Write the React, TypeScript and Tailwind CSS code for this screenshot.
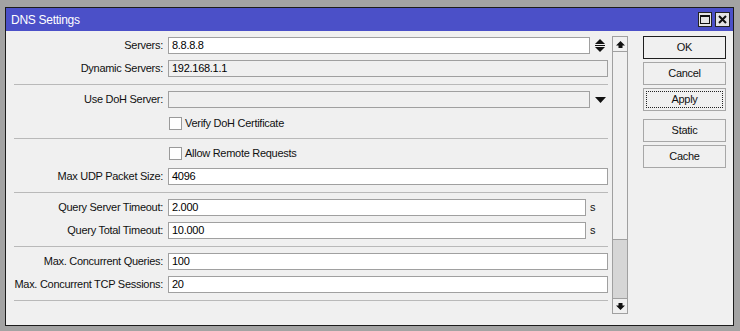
import React from "react";

const font = { fontFamily: "'Liberation Sans', Arial, sans-serif" };

function Row({ label, children }: { label: string; children?: React.ReactNode }) {
  return (
    <div className="flex h-[17px] items-center">
      <div className="w-[158px] shrink-0 pr-[1px] text-right leading-[17px]">{label}</div>
      <div className="ml-[4px] flex h-[17px] items-center">{children}</div>
    </div>
  );
}

function Input({ value, w, gray }: { value?: string; w: number; gray?: boolean }) {
  return (
    <div
      className={
        "box-border h-[17px] border border-[#a0a0a0] pl-[3px] leading-[15px] text-black " +
        (gray ? "bg-[#f0f0f0]" : "bg-white")
      }
      style={{ width: w }}
    >
      {value}
    </div>
  );
}

function Sep({ top = 7 }: { top?: number }) {
  return (
    <div
      className={"ml-[8px] mb-[6px] h-px w-[594px] bg-[#b9b9b9] " + (top === 6 ? "mt-[6px]" : "mt-[7px]")}
    />
  );
}

function Check({ label }: { label: string }) {
  return (
    <div className="flex h-[17px] items-center">
      <div className="ml-[163px] box-border h-[13px] w-[13px] border border-[#9a9a9a] bg-white" />
      <div className="ml-[3px] leading-[17px]">{label}</div>
    </div>
  );
}

function Btn({ label, variant }: { label: string; variant?: "default" | "focus" }) {
  return (
    <div
      className={
        "relative box-border flex h-[23px] w-[83px] items-center justify-center border bg-[#f0f0f0] " +
        (variant === "default" ? "border-[#1e1e1e]" : "border-[#a7a7a7]")
      }
    >
      {variant === "focus" && (
        <div className="absolute inset-[2px] border border-dotted border-[#222]" />
      )}
      <span className="relative">{label}</span>
    </div>
  );
}

export default function App() {
  return (
    <div
      className="box-border h-[331px] w-[740px] bg-[#a3a3a3] pb-[5px] pl-[5px] pr-[6px] pt-[7px] text-[11px] tracking-[-0.28px] text-[#111]"
      style={font}
    >
      <div className="box-border flex h-[319px] w-[729px] flex-col border border-[#1c1c1c] bg-[#f0f0f0]">
        {/* title bar */}
        <div className="flex h-[23px] shrink-0 items-center bg-[#4b50c8] pl-[5px] pr-[3px]">
          <span className="text-[12px] text-white">DNS Settings</span>
          <div className="ml-auto flex gap-[3px]">
            <div className="box-border flex h-[15px] w-[14px] items-center justify-center border border-[#222] bg-[#e4e4e4]">
              <div className="box-border h-[9px] w-[10px] border border-[#111] border-t-2" />
            </div>
            <div className="box-border flex h-[15px] w-[15px] items-center justify-center border border-[#222] bg-[#e4e4e4]">
              <svg width="9" height="9" viewBox="0 0 9 9">
                <path d="M1 1 L8 8 M8 1 L1 8" stroke="#111" strokeWidth="2" />
              </svg>
            </div>
          </div>
        </div>

        {/* content */}
        <div className="flex flex-1">
          {/* form */}
          <div className="flex w-[602px] flex-col pt-[6px]">
            <div className="flex flex-col gap-[6px]">
              <Row label="Servers:">
                <Input value="8.8.8.8" w={422} />
                <svg className="ml-[4px]" width="12" height="15" viewBox="0 0 12 15">
                  <path d="M6 1 L11 6 L1 6 Z" fill="#111" />
                  <rect x="1" y="7" width="10" height="1" fill="#111" />
                  <path d="M1 9 L11 9 L6 14 Z" fill="#111" />
                </svg>
              </Row>
              <Row label="Dynamic Servers:">
                <Input value="192.168.1.1" w={440} gray />
              </Row>
            </div>
            <Sep />
            <div className="flex flex-col gap-[7px]">
              <Row label="Use DoH Server:">
                <Input w={422} gray />
                <svg className="ml-[5px]" width="11" height="6" viewBox="0 0 11 6">
                  <path d="M0 0 L11 0 L5.5 6 Z" fill="#111" />
                </svg>
              </Row>
              <Check label="Verify DoH Certificate" />
            </div>
            <Sep top={6} />
            <div className="flex flex-col gap-[6px]">
              <Check label="Allow Remote Requests" />
              <Row label="Max UDP Packet Size:">
                <Input value="4096" w={440} />
              </Row>
            </div>
            <Sep />
            <div className="flex flex-col gap-[6px]">
              <Row label="Query Server Timeout:">
                <Input value="2.000" w={418} />
                <span className="ml-[4px]">s</span>
              </Row>
              <Row label="Query Total Timeout:">
                <Input value="10.000" w={418} />
                <span className="ml-[4px]">s</span>
              </Row>
            </div>
            <Sep />
            <div className="flex flex-col gap-[6px]">
              <Row label="Max. Concurrent Queries:">
                <Input value="100" w={440} />
              </Row>
              <Row label="Max. Concurrent TCP Sessions:">
                <Input value="20" w={440} />
              </Row>
            </div>
            <Sep />
          </div>

          {/* scrollbar */}
          <div className="ml-[4px] mt-[5px] box-border flex h-[278px] w-[16px] flex-col border border-[#a0a0a0]">
            <div className="flex h-[15px] shrink-0 items-center justify-center border-b border-[#a0a0a0] bg-[#f0f0f0]">
              <svg width="9" height="7" viewBox="0 0 9 7">
                <path d="M4.5 0 L9 4.5 L6.5 4.5 L6.5 7 L2.5 7 L2.5 4.5 L0 4.5 Z" fill="#111" />
              </svg>
            </div>
            <div className="h-[188px] shrink-0 border-b border-[#a0a0a0] bg-[#f0f0f0]" />
            <div className="flex-1 bg-[#d6d6d6]" />
            <div className="flex h-[15px] shrink-0 items-center justify-center border-t border-[#a0a0a0] bg-[#f0f0f0]">
              <svg width="9" height="7" viewBox="0 0 9 7">
                <path d="M4.5 7 L9 2.5 L6.5 2.5 L6.5 0 L2.5 0 L2.5 2.5 L0 2.5 Z" fill="#111" />
              </svg>
            </div>
          </div>

          {/* buttons */}
          <div className="ml-[15px] mt-[5px] flex flex-col">
            <Btn label="OK" variant="default" />
            <div className="h-[3px]" />
            <Btn label="Cancel" />
            <div className="h-[3px]" />
            <Btn label="Apply" variant="focus" />
            <div className="h-[8px]" />
            <Btn label="Static" />
            <div className="h-[3px]" />
            <Btn label="Cache" />
          </div>
        </div>
      </div>
    </div>
  );
}
